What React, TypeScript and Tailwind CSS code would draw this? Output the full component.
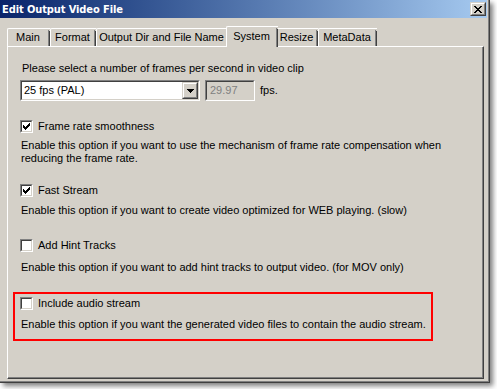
import React from 'react'

function CheckMark() {
  // classic 7x7 pixel tick
  const px: [number, number][] = [
    [6, 0],
    [5, 1], [6, 1],
    [0, 2], [4, 2], [5, 2], [6, 2],
    [0, 3], [1, 3], [3, 3], [4, 3], [5, 3],
    [0, 4], [1, 4], [2, 4], [3, 4], [4, 4],
    [1, 5], [2, 5], [3, 5],
    [2, 6],
  ]
  return (
    <svg width="7" height="7" viewBox="0 0 7 7" shapeRendering="crispEdges">
      {px.map(([x, y], i) => (
        <rect key={i} x={x} y={y} width="1" height="1" fill="#000" />
      ))}
    </svg>
  )
}

function CheckBox({ checked, label }: { checked?: boolean; label: string }) {
  return (
    <div className="flex items-center h-[13px]">
      <div className="w-[13px] h-[13px] border border-t-[#808080] border-l-[#808080] border-b-white border-r-white">
        <div className="w-full h-full bg-white border border-t-[#404040] border-l-[#404040] border-b-[#d4d0c8] border-r-[#d4d0c8] flex items-center justify-center">
          {checked && <CheckMark />}
        </div>
      </div>
      <span className="ml-[5px]">{label}</span>
    </div>
  )
}

function Sunken({ className, children }: { className: string; children: React.ReactNode }) {
  return (
    <div className={`border border-t-[#808080] border-l-[#808080] border-b-white border-r-white ${className}`}>
      <div className="w-full h-full border border-t-[#404040] border-l-[#404040] border-b-[#d4d0c8] border-r-[#d4d0c8] flex items-center">
        {children}
      </div>
    </div>
  )
}

function Raised({ className, children }: { className: string; children: React.ReactNode }) {
  return (
    <div className={`bg-[#d4d0c8] border border-t-[#d4d0c8] border-l-[#d4d0c8] border-b-[#404040] border-r-[#404040] ${className}`}>
      <div className="w-full h-full border border-t-white border-l-white border-b-[#808080] border-r-[#808080] flex items-center justify-center">
        {children}
      </div>
    </div>
  )
}

function Tab({ label, width, selected }: { label: string; width: string; selected?: boolean }) {
  if (selected) {
    return (
      <div className={`${width} -mx-[2px] h-[21px] -mb-[1px] relative z-10 bg-[#d4d0c8] border-l border-t border-white rounded-tl-[2px] flex`}>
        <div className="flex-1 flex items-start justify-center pt-[3px]">{label}</div>
        <div className="w-[1px] mt-[1px] bg-[#808080]" />
        <div className="w-[1px] mt-[2px] bg-[#404040]" />
      </div>
    )
  }
  return (
    <div className={`${width} h-[18px] bg-[#d4d0c8] border-l border-t border-white rounded-tl-[2px] flex`}>
      <div className="flex-1 flex items-start justify-center pt-[2px]">{label}</div>
      <div className="w-[1px] mt-[1px] bg-[#808080]" />
      <div className="w-[1px] mt-[2px] bg-[#404040]" />
    </div>
  )
}

export default function App() {
  const closeX: [number, number][] = [
    [0, 0], [1, 0], [6, 0], [7, 0],
    [1, 1], [2, 1], [5, 1], [6, 1],
    [2, 2], [3, 2], [4, 2], [5, 2],
    [3, 3], [4, 3],
    [2, 4], [3, 4], [4, 4], [5, 4],
    [1, 5], [2, 5], [5, 5], [6, 5],
    [0, 6], [1, 6], [6, 6], [7, 6],
  ]

  return (
    <div className="w-[497px] h-[389px] bg-white overflow-hidden font-['Liberation_Sans',Arial,sans-serif] text-[11px] leading-[13px] text-black">
      <div className="w-[490px] h-[383px] bg-[#d4d0c8] border-r border-b border-[#404040] shadow-[3px_3px_5px_rgba(0,0,0,0.5)] flex flex-col">
        <div className="flex-1 flex flex-col border-r border-b border-[#808080]">
          {/* title bar */}
          <div className="h-[18px] mr-[1px] flex items-center justify-between pl-[2px] pr-[1px] bg-gradient-to-r from-[#0a246a] to-[#a6caf0]">
            <span className="text-white font-bold text-[11px] font-['DejaVu_Sans_Condensed',sans-serif] tracking-[-0.1px]">Edit Output Video File</span>
            <Raised className="w-[16px] h-[14px]">
              <svg width="8" height="7" viewBox="0 0 8 7" shapeRendering="crispEdges">
                {closeX.map(([x, y], i) => (
                  <rect key={i} x={x} y={y} width="1" height="1" fill="#000" />
                ))}
              </svg>
            </Raised>
          </div>

          {/* tabs */}
          <div className="flex items-end pl-[7px] mt-[8px] h-[20px]">
            <Tab label="Main" width="w-[43px]" />
            <Tab label="Format" width="w-[46px]" />
            <Tab label="Output Dir and File Name" width="w-[132px]" />
            <Tab label="System" width="w-[52px]" selected />
            <Tab label="Resize" width="w-[42px]" />
            <Tab label="MetaData" width="w-[59px]" />
          </div>

          {/* tab panel */}
          <div className="ml-[7px] w-[477px] h-[333px] border-l border-t border-white border-r border-b border-r-[#404040] border-b-[#404040]">
            <div className="w-full h-full border-r border-b border-[#808080] pl-[12px] flex flex-col">
              <div className="mt-[15px] ml-[2px]">Please select a number of frames per second in video clip</div>

              <div className="mt-[5px] flex items-center">
                <Sunken className="w-[180px] h-[21px] bg-white">
                  <span className="flex-1 pl-[2px]">25 fps (PAL)</span>
                  <Raised className="w-[16px] h-[17px]">
                    <svg width="7" height="4" viewBox="0 0 7 4" shapeRendering="crispEdges">
                      <path d="M0 0h7v1H0zM1 1h5v1H1zM2 2h3v1H2zM3 3h1v1H3z" fill="#000" />
                    </svg>
                  </Raised>
                </Sunken>
                <Sunken className="ml-[5px] w-[50px] h-[21px]">
                  <span className="pl-[3px] text-[#808080]">29.97</span>
                </Sunken>
                <span className="ml-[5px]">fps.</span>
              </div>

              <div className="mt-[19px]">
                <CheckBox checked label="Frame rate smoothness" />
              </div>
              <div className="mt-[6px] ml-[1px] w-[440px]">
                Enable this option if you want to use the mechanism of frame rate compensation when reducing the frame rate.
              </div>

              <div className="mt-[19px]">
                <CheckBox checked label="Fast Stream" />
              </div>
              <div className="mt-[7px] ml-[1px]">
                Enable this option if you want to create video optimized for WEB playing. (slow)
              </div>

              <div className="mt-[22px]">
                <CheckBox label="Add Hint Tracks" />
              </div>
              <div className="mt-[9px] ml-[1px]">
                Enable this option if you want to add hint tracks to output video. (for MOV only)
              </div>

              <div className="mt-[18px] -ml-[7px] w-[420px] h-[49px] border-2 border-[#ff0000] pl-[5px] pt-[3px] flex flex-col">
                <CheckBox label="Include audio stream" />
                <div className="mt-[8px] ml-[1px]">
                  Enable this option if you want the generated video files to contain the audio stream.
                </div>
              </div>
            </div>
          </div>
        </div>
      </div>
    </div>
  )
}
